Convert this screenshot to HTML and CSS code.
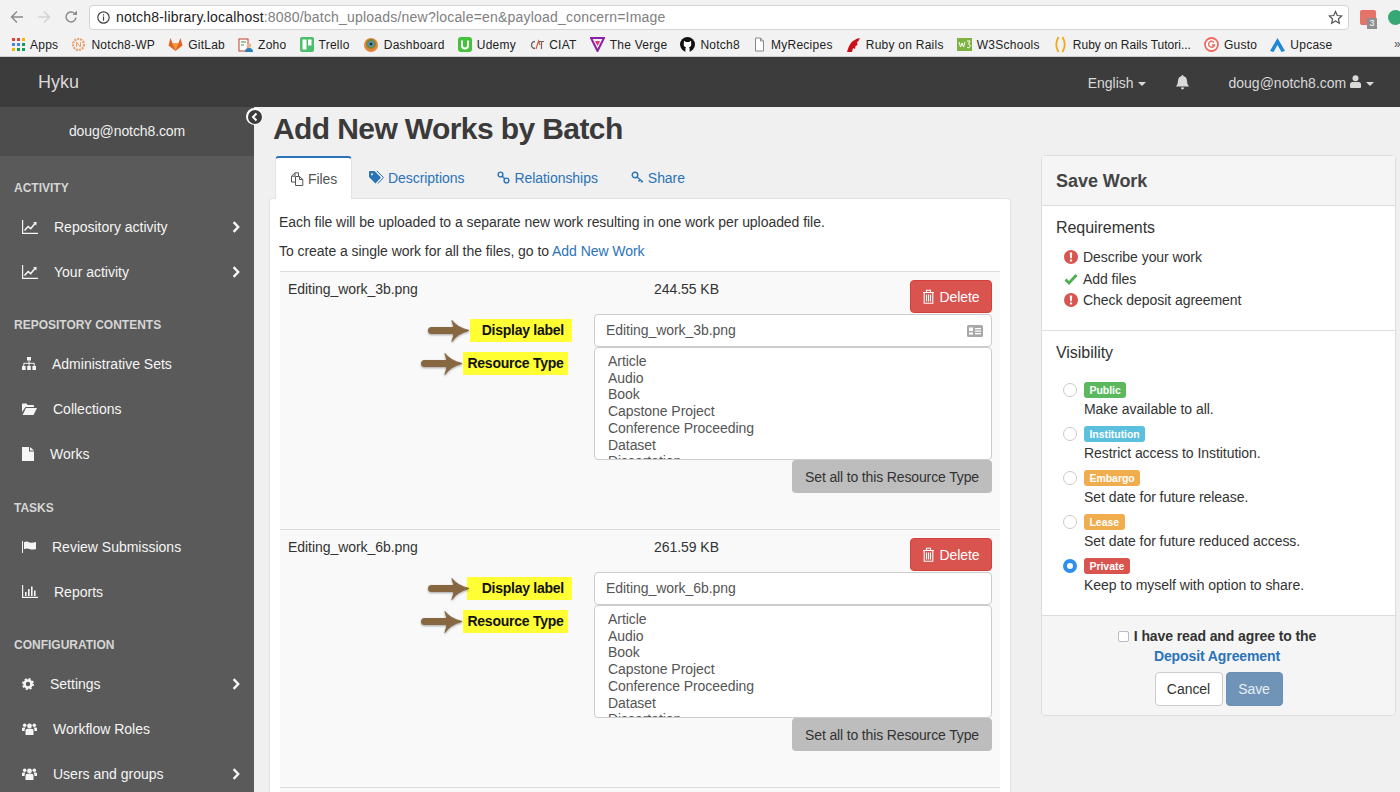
FILE: index.html
```html
<!DOCTYPE html>
<html lang="en">
<head>
    <meta charset="UTF-8">
    <title>Add New Works by Batch</title>
    <link rel="stylesheet" href="styles.css">
</head>
<body>
    <svg class="defs" xmlns="http://www.w3.org/2000/svg">
        <symbol id="i-chart" viewBox="0 0 16 14"><path d="M0.6 0v13.4H16" fill="none" stroke="currentColor" stroke-width="1.2"/><path d="M2.5 10.5l3.6-4 2.6 2.2 4-5" fill="none" stroke="currentColor" stroke-width="1.6"/><path d="M11 2.6l3.6-.8-.2 3.6z" fill="currentColor"/></symbol>
        <symbol id="i-chev" viewBox="0 0 8 12"><path d="M1.6 1.2L6.2 6l-4.6 4.8" fill="none" stroke="currentColor" stroke-width="2.4"/></symbol>
        <symbol id="i-sitemap" viewBox="0 0 14 13"><path d="M5 0h4v3.6H5zM0 9h3.6v4H0zM5.2 9h3.6v4H5.200zM10.400 9H14v4h-3.600z" fill="currentColor"/><path d="M1.800 9V6.300h10.400V9M7 3.600V9" fill="none" stroke="currentColor" stroke-width="1"/></symbol>
        <symbol id="i-folder" viewBox="0 0 15 12"><path d="M0 1.500Q0 .5 1 .5h3.500l1 1.500H11q1 0 1 1v1H3.500L0 9z" fill="currentColor"/><path d="M4 5h11l-3.500 7H.600z" fill="currentColor"/></symbol>
        <symbol id="i-file" viewBox="0 0 12 14"><path d="M0 0h7v4.500h5V14H0zM8 0l4 3.500H8z" fill="currentColor"/></symbol>
        <symbol id="i-flag" viewBox="0 0 14 12"><path d="M0 0h1v12H0z" fill="currentColor"/><path d="M2 1.200q2.500-1.200 5 0t7-.2v7q-3.500 1.200-6.500 0T2 8.200z" fill="currentColor"/></symbol>
        <symbol id="i-bars" viewBox="0 0 16 13"><path d="M.6 0v12.400H16" fill="none" stroke="currentColor" stroke-width="1.200"/><path d="M3 7h1.600v4H3zM6 4h1.600v7H6zM9 1.500h1.600V11H9zM12 5.500h1.600V11H12z" fill="currentColor"/></symbol>
        <symbol id="i-cog" viewBox="0 0 12 12"><circle cx="6" cy="6" r="3.500" fill="none" stroke="currentColor" stroke-width="2.600"/><circle cx="6" cy="6" r="5" fill="none" stroke="currentColor" stroke-width="2" stroke-dasharray="2 1.930"/></symbol>
        <symbol id="i-users" viewBox="0 0 15 12"><circle cx="7.500" cy="3" r="2.400" fill="currentColor"/><circle cx="2.700" cy="2.300" r="1.800" fill="currentColor"/><circle cx="12.300" cy="2.300" r="1.800" fill="currentColor"/><path d="M3.500 12V7.500q0-1.800 2-1.800h4q2 0 2 1.800V12z" fill="currentColor"/><path d="M0 8V5.500q0-1 1-1h2.500Q2.500 5.500 2.500 8zM15 8V5.500q0-1-1-1h-2.500q1 1 1 3.500z" fill="currentColor"/></symbol>
        <symbol id="i-trash" viewBox="0 0 13 15"><path d="M1 3.500h11M4.500 3.500V1.200h4v2.300M2.200 3.500v10.800h8.600V3.500M4.500 5.500v7M6.500 5.500v7M8.500 5.500v7" fill="none" stroke="currentColor" stroke-width="1.100"/></symbol>
        <symbol id="i-alert" viewBox="0 0 14 14"><circle cx="7" cy="7" r="7" fill="#d9534f"/><path d="M5.800 2.600h2.400l-.3 5.600H6.100zM5.900 9.400h2.200v2H5.900z" fill="#fff"/></symbol>
        <symbol id="i-arrow" viewBox="0 0 42 24"><path d="M3.500 11.500h24" stroke="currentColor" stroke-width="7" stroke-linecap="round"/><path d="M24 1.500q5 7 17 10-12 3-17 11 2-5 2-10.500T24 1.500z" fill="currentColor" stroke="currentColor" stroke-linejoin="round"/></symbol>
    </svg>

    <div class="browser-bar">
        <div class="browser-nav">
            <svg width="14" height="14" viewBox="0 0 14 14" class="nav-on"><path d="M13 7H2M7 1.500L1.500 7 7 12.500" fill="none" stroke="currentColor" stroke-width="1.500"/></svg>
            <svg width="14" height="14" viewBox="0 0 14 14" class="nav-off"><path d="M1 7h11M7 1.500L12.500 7 7 12.500" fill="none" stroke="currentColor" stroke-width="1.500"/></svg>
            <svg width="14" height="14" viewBox="0 0 14 14" class="nav-on"><path d="M12 7.500A5 5 0 1 1 10.500 3.300" fill="none" stroke="currentColor" stroke-width="1.500"/><path d="M8.500 5H13V.5z" fill="currentColor"/></svg>
        </div>
        <div class="url-box">
            <svg width="13" height="13" viewBox="0 0 13 13"><circle cx="6.500" cy="6.500" r="5.700" fill="none" stroke="#444" stroke-width="1.200"/><path d="M5.900 5.500h1.200v4.200H5.900zM5.900 3.200h1.200v1.200H5.900z" fill="#444"/></svg>
            <span class="url-text"><b>notch8-library.localhost</b>:8080/batch_uploads/new?locale=en&amp;payload_concern=Image</span>
            <svg class="url-star" width="15" height="15" viewBox="0 0 24 24"><path d="M12 2.500l2.900 6.300 6.900.8-5.100 4.700 1.400 6.800-6.100-3.400-6.100 3.400 1.400-6.800-5.100-4.700 6.900-.8z" fill="none" stroke="#555" stroke-width="2"/></svg>
        </div>
        <div class="ext-red">
            <span class="ext-num">3</span>
        </div>
        <div class="ext-green"></div>
    </div>

    <div class="bookmarks">
        <a class="bm"><svg width="13" height="13" viewBox="0 0 13 13"><g fill="#db4437"><rect width="3" height="3"/><rect x="5" width="3" height="3"/></g><rect x="10" width="3" height="3" fill="#f4b400"/><g fill="#4285f4"><rect y="5" width="3" height="3"/><rect x="5" y="5" width="3" height="3"/></g><rect x="10" y="5" width="3" height="3" fill="#0f9d58"/><g fill="#f4b400"><rect y="10" width="3" height="3"/></g><g fill="#0f9d58"><rect x="5" y="10" width="3" height="3"/><rect x="10" y="10" width="3" height="3"/></g></svg>Apps</a>
        <a class="bm"><svg width="15" height="15" viewBox="0 0 15 15"><circle cx="7.500" cy="7.500" r="5.500" fill="none" stroke="#e9a06a" stroke-width="2.200" stroke-dasharray="2 1"/><path d="M5.500 10V5l4 5V5" fill="none" stroke="#e9a06a"/></svg>Notch8-WP</a>
        <a class="bm"><svg width="15" height="15" viewBox="0 0 15 15"><path d="M7.500 14L.5 8.500 2.500 1l2.200 5.500h5.600L12.500 1l2 7.500z" fill="#e2622a"/><path d="M7.500 14L4.700 6.500h5.600z" fill="#f59c2c"/></svg>GitLab</a>
        <a class="bm"><svg width="15" height="16" viewBox="0 0 15 16"><rect x="1" y="2" width="9" height="12" fill="#fff" stroke="#c0392b"/><path d="M3 5h5M3 8h3" stroke="#3a8f3a"/><circle cx="11" cy="8.500" r="2.300" fill="#e8b48a"/><path d="M7 15q0-4 4-4t4 4z" fill="#2c7fb8"/></svg>Zoho</a>
        <a class="bm"><svg width="14" height="15" viewBox="0 0 14 15"><rect width="14" height="15" rx="2" fill="#4bbf6b"/><rect x="2.500" y="2.500" width="4" height="10" fill="#fff"/><rect x="8" y="2.500" width="3.500" height="6" fill="#fff"/></svg>Trello</a>
        <a class="bm"><svg width="16" height="16" viewBox="0 0 16 16"><circle cx="8" cy="8" r="7" fill="#e8843a"/><circle cx="8" cy="7" r="5" fill="#7a8a3a"/><circle cx="8" cy="7" r="2.800" fill="#4a90c8"/><circle cx="8" cy="7" r="1.300" fill="#222"/></svg>Dashboard</a>
        <a class="bm"><svg width="14" height="15" viewBox="0 0 14 15"><rect width="14" height="15" rx="3" fill="#45c23c"/><path d="M4 3.500v5a3 3 0 0 0 6 0v-5" fill="none" stroke="#fff" stroke-width="2"/></svg>Udemy</a>
        <a class="bm"><svg width="15" height="12" viewBox="0 0 15 12"><path d="M6 2.500a3.500 3.500 0 1 0 0 7" fill="none" stroke="#666" stroke-width="1.400"/><path d="M7 10l2.500-8L11 6" fill="none" stroke="#d9603a" stroke-width="1.200"/><path d="M10 2.500h5M12.500 2.500V10" fill="none" stroke="#666" stroke-width="1.200"/></svg>CIAT</a>
        <a class="bm"><svg width="15" height="15" viewBox="0 0 15 15"><path d="M1 1h13L7.500 14z" fill="none" stroke="#8a1fa8" stroke-width="2"/><path d="M5 4h5l-2.500 5z" fill="#e0337a"/></svg>The Verge</a>
        <a class="bm"><svg width="15" height="15" viewBox="0 0 15 15"><circle cx="7.500" cy="7.500" r="7.500" fill="#111"/><path d="M3.800 6.500L4 3.800l2 1.100h3l2-1.100.2 2.700q.6 3-2.200 3.700.6.500.6 1.500V15H5.400v-3.300Q5.400 10.700 6 10.200 3.200 9.500 3.800 6.500z" fill="#fff"/></svg>Notch8</a>
        <a class="bm"><svg width="13" height="15" viewBox="0 0 13 15"><path d="M2.500 1h5l3 3v10h-8z" fill="#fff" stroke="#888"/><path d="M7.500 1v3h3" fill="none" stroke="#888"/></svg>MyRecipes</a>
        <a class="bm"><svg width="15" height="16" viewBox="0 0 15 16"><path d="M1 15Q3 7 7 4t7-3q-1 3-3 4l.5 3-2 1-.5 3-2-1-1 4z" fill="#cc0f16"/></svg>Ruby on Rails</a>
        <a class="bm"><svg width="15" height="13" viewBox="0 0 15 13"><rect width="15" height="13" fill="#7cb342"/><path d="M2 4l1.500 5L5 5l1.500 4L8 4" fill="none" stroke="#fff"/><path d="M10 3h3l-1.500 3q2 .5 1.500 2.500T10 9.500" fill="none" stroke="#fff"/></svg>W3Schools</a>
        <a class="bm bm-long"><svg width="15" height="17" viewBox="0 0 15 17"><path d="M5.500 1Q1 8.500 5.500 16M9.500 1q4.500 7.500 0 15" fill="none" stroke="#f0a818" stroke-width="1.800"/></svg>Ruby on Rails Tutori...</a>
        <a class="bm"><svg width="15" height="15" viewBox="0 0 15 15"><circle cx="7.500" cy="7.500" r="6.500" fill="#fff" stroke="#ef6a5e" stroke-width="1.800"/><path d="M10 5.500a3 3 0 1 0 .5 2.500H8" fill="none" stroke="#ef6a5e" stroke-width="1.400"/></svg>Gusto</a>
        <a class="bm"><svg width="15" height="14" viewBox="0 0 15 14"><path d="M7.500 0L15 13l-3.500 1-4-7-4 7L0 13z" fill="#1e88d8"/></svg>Upcase</a>
        <span class="bm-more">»</span>
    </div>

    <nav class="navbar">
        <a class="brand">Hyku</a>
        <div class="nav-right">
            <a class="nav-lang">English <i class="caret"></i></a>
            <svg class="nav-bell" width="13" height="15" viewBox="0 0 13 15"><path d="M6.500 0q1 0 1 1.200Q11 2 11 6q0 3.500 2 5.500H0Q2 9.500 2 6q0-4 3.500-4.800Q5.500 0 6.500 0zM4.800 12.500h3.400q-.3 2-1.700 2t-1.700-2z" fill="currentColor"/></svg>
            <a class="nav-user">doug@notch8.com
                <svg width="11" height="13" viewBox="0 0 11 13"><circle cx="5.500" cy="3.300" r="3" fill="currentColor"/><path d="M0 12V9.500Q0 7 2.500 7h6Q11 7 11 9.500V12q0 1-1 1H1q-1 0-1-1z" fill="currentColor"/></svg>
                <i class="caret"></i></a>
        </div>
    </nav>

    <div class="layout">
        <aside class="sidebar">
            <div class="side-user">doug@notch8.com</div>

            <h4 class="side-head">ACTIVITY</h4>
            <a class="side-item"><svg class="ico" width="16" height="14"><use href="#i-chart"/></svg>Repository activity<svg class="chev" width="8" height="12"><use href="#i-chev"/></svg></a>
            <a class="side-item"><svg class="ico" width="16" height="14"><use href="#i-chart"/></svg>Your activity<svg class="chev" width="8" height="12"><use href="#i-chev"/></svg></a>

            <h4 class="side-head">REPOSITORY CONTENTS</h4>
            <a class="side-item"><svg class="ico" width="14" height="13"><use href="#i-sitemap"/></svg>Administrative Sets</a>
            <a class="side-item"><svg class="ico" width="15" height="12"><use href="#i-folder"/></svg>Collections</a>
            <a class="side-item"><svg class="ico" width="12" height="14"><use href="#i-file"/></svg>Works</a>

            <h4 class="side-head side-head-wide">TASKS</h4>
            <a class="side-item"><svg class="ico" width="14" height="12"><use href="#i-flag"/></svg>Review Submissions</a>
            <a class="side-item"><svg class="ico" width="16" height="13"><use href="#i-bars"/></svg>Reports</a>

            <h4 class="side-head">CONFIGURATION</h4>
            <a class="side-item"><svg class="ico" width="12" height="12"><use href="#i-cog"/></svg>Settings<svg class="chev" width="8" height="12"><use href="#i-chev"/></svg></a>
            <a class="side-item"><svg class="ico" width="15" height="12"><use href="#i-users"/></svg>Workflow Roles</a>
            <a class="side-item"><svg class="ico" width="15" height="12"><use href="#i-users"/></svg>Users and groups<svg class="chev" width="8" height="12"><use href="#i-chev"/></svg></a>
        </aside>
        <div class="side-toggle"><svg width="14" height="14" viewBox="0 0 14 14"><circle cx="7" cy="7" r="7" fill="#3c3c3c"/><path d="M8.500 3.500L5 7l3.500 3.500" fill="none" stroke="#fff" stroke-width="2"/></svg></div>

        <main class="main">
            <h1 class="title">Add New Works by Batch</h1>
            <div class="columns">
                <section class="work">
                    <ul class="tabs">
                        <li class="tab active"><svg width="14" height="14" viewBox="0 0 14 14"><path d="M5 10H1.500V4.200L5 .8h3.500V4M1.500 4.200H5V.8" fill="none" stroke="currentColor" stroke-width="1"/><path d="M5.500 4.500h4l3.300 3v6H5.500zM9.500 4.500v3h3.300" fill="none" stroke="currentColor" stroke-width="1"/></svg>Files</li>
                        <li class="tab"><svg width="15" height="13" viewBox="0 0 15 13"><path d="M0 1q0-1 1-1h4.500L12 6.500 6.500 12.500 0 6zM3 2.200a1 1 0 1 0 .01 0z" fill="currentColor" fill-rule="evenodd"/><path d="M8 0l6.500 6.500-5.500 6" fill="none" stroke="currentColor" stroke-width="1"/></svg>Descriptions</li>
                        <li class="tab"><svg width="13" height="13" viewBox="0 0 13 13"><circle cx="3.500" cy="3.500" r="2.400" fill="none" stroke="currentColor" stroke-width="1.400"/><circle cx="9.500" cy="9.500" r="2.400" fill="none" stroke="currentColor" stroke-width="1.400"/><path d="M5 5l3 3" stroke="currentColor" stroke-width="1.400"/></svg>Relationships</li>
                        <li class="tab"><svg width="13" height="13" viewBox="0 0 13 13"><circle cx="4" cy="4" r="2.800" fill="none" stroke="currentColor" stroke-width="1.400"/><path d="M6 6l6 5M9 8.500l-1.500 2M11 10l-1 1.500" fill="none" stroke="currentColor" stroke-width="1.300"/></svg>Share</li>
                    </ul>
                    <div class="panel">
                        <p class="note">Each file will be uploaded to a separate new work resulting in one work per uploaded file.</p>
                        <p class="note">To create a single work for all the files, go to <a class="link">Add New Work</a></p>

                        <div class="file-row">
                            <div class="file-head">
                                <span class="file-name">Editing_work_3b.png</span>
                                <span class="file-size">244.55 KB</span>
                                <a class="btn-delete"><svg width="13" height="15"><use href="#i-trash"/></svg>Delete</a>
                            </div>
                            <div class="field">
                                <div class="label-side label-display">
                                    <svg class="arrow" width="42" height="24"><use href="#i-arrow"/></svg>
                                    <span class="mark mark-first">Display label</span>
                                </div>
                                <div class="input-box">Editing_work_3b.png
                                    <svg class="input-card" width="16" height="12" viewBox="0 0 16 12"><rect width="16" height="12" rx="1.500" fill="#a8a8a8"/><rect x="2" y="2.500" width="4" height="3.500" fill="#fff"/><path d="M2 7.500h4v2H2zM8 3h6v1.300H8zM8 5.500h6v1.300H8zM8 8h6v1.300H8z" fill="#fff"/></svg>
                                </div>
                            </div>
                            <div class="field">
                                <div class="label-side label-type">
                                    <svg class="arrow" width="42" height="24"><use href="#i-arrow"/></svg>
                                    <span class="mark">Resource Type</span>
                                </div>
                                <ul class="type-list">
                                    <li>Article</li><li>Audio</li><li>Book</li><li>Capstone Project</li><li>Conference Proceeding</li><li>Dataset</li><li>Dissertation</li>
                                </ul>
                            </div>
                            <div class="set-all"><a class="btn-grey">Set all to this Resource Type</a></div>
                        </div>

                        <div class="file-row">
                            <div class="file-head">
                                <span class="file-name">Editing_work_6b.png</span>
                                <span class="file-size">261.59 KB</span>
                                <a class="btn-delete"><svg width="13" height="15"><use href="#i-trash"/></svg>Delete</a>
                            </div>
                            <div class="field">
                                <div class="label-side label-display">
                                    <svg class="arrow" width="42" height="24"><use href="#i-arrow"/></svg>
                                    <span class="mark mark-second">Display label</span>
                                </div>
                                <div class="input-box">Editing_work_6b.png</div>
                            </div>
                            <div class="field">
                                <div class="label-side label-type">
                                    <svg class="arrow" width="42" height="24"><use href="#i-arrow"/></svg>
                                    <span class="mark">Resource Type</span>
                                </div>
                                <ul class="type-list">
                                    <li>Article</li><li>Audio</li><li>Book</li><li>Capstone Project</li><li>Conference Proceeding</li><li>Dataset</li><li>Dissertation</li>
                                </ul>
                            </div>
                            <div class="set-all"><a class="btn-grey">Set all to this Resource Type</a></div>
                        </div>
                        <div class="file-row file-row-end"></div>
                    </div>
                </section>

                <aside class="save">
                    <h3 class="save-head">Save Work</h3>
                    <div class="save-req">
                        <h4 class="save-title">Requirements</h4>
                        <ul class="req-list">
                            <li><svg width="14" height="14"><use href="#i-alert"/></svg>Describe your work</li>
                            <li><svg width="14" height="14" viewBox="0 0 14 14"><path d="M1.500 7.500l3.500 3.500 7.500-8" fill="none" stroke="#4cae4c" stroke-width="2.800"/></svg>Add files</li>
                            <li><svg width="14" height="14"><use href="#i-alert"/></svg>Check deposit agreement</li>
                        </ul>
                    </div>
                    <div class="save-vis">
                        <h4 class="save-title">Visibility</h4>
                        <label class="vis"><input type="radio" name="vis"><span><b class="badge green">Public</b><br>Make available to all.</span></label>
                        <label class="vis"><input type="radio" name="vis"><span><b class="badge blue">Institution</b><br>Restrict access to Institution.</span></label>
                        <label class="vis"><input type="radio" name="vis"><span><b class="badge orange">Embargo</b><br>Set date for future release.</span></label>
                        <label class="vis"><input type="radio" name="vis"><span><b class="badge orange">Lease</b><br>Set date for future reduced access.</span></label>
                        <label class="vis"><input type="radio" name="vis" checked><span><b class="badge red">Private</b><br>Keep to myself with option to share.</span></label>
                    </div>
                    <div class="save-foot">
                        <div class="agree"><i class="check"></i>I have read and agree to the</div>
                        <a class="agree-link">Deposit Agreement</a>
                        <div class="foot-btns">
                            <a class="btn-cancel">Cancel</a>
                            <a class="btn-save">Save</a>
                        </div>
                    </div>
                </aside>
            </div>
        </main>
    </div>
</body>
</html>
```

FILE: styles.css
```css
* {
    margin: 0;
    padding: 0;
    box-sizing: border-box;
}

html, body {
    height: 792px;
    overflow: hidden;
}

body {
    font-family: "Liberation Sans", Arial, sans-serif;
    font-size: 14px;
    color: #333;
    background: #f0f0f0;
    display: flex;
    flex-direction: column;
}

ul {
    list-style: none;
}

.defs {
    display: none;
}

/* browser chrome */
.browser-bar {
    height: 33px;
    background: #f2f2f2;
    display: flex;
    align-items: center;
    padding: 1px 0 0 10px;
    flex: none;
    overflow: hidden;
}

.browser-nav {
    display: flex;
    gap: 13px;
    width: 79px;
    flex: none;
}

.nav-on {
    color: #8c8c8c;
}

.nav-off {
    color: #d2d2d2;
}

.url-box {
    width: 1260px;
    height: 25px;
    flex: none;
    background: #fff;
    border: 1px solid #d4d4d4;
    border-radius: 4px;
    display: flex;
    align-items: center;
    padding: 0 5px 0 7px;
    gap: 6px;
    font-size: 14px;
    letter-spacing: 0.2px;
    color: #808080;
}

.url-text {
    flex: 1;
    white-space: nowrap;
}

.url-text b {
    font-weight: normal;
    color: #222;
}

.ext-red {
    width: 16px;
    height: 15px;
    flex: none;
    background: #e57368;
    border-radius: 2px;
    margin-left: 11px;
    position: relative;
}

.ext-num {
    position: absolute;
    left: 7px;
    top: 8px;
    width: 10px;
    height: 11px;
    background: #8f8f8f;
    color: #fff;
    font-size: 9px;
    line-height: 11px;
    text-align: center;
}

.ext-green {
    width: 15px;
    height: 15px;
    border-radius: 50%;
    background: #35a875;
    margin-left: 12px;
    flex: none;
}

.bookmarks {
    height: 24px;
    background: #f2f2f2;
    border-bottom: 1px solid #d0d0d0;
    display: flex;
    align-items: center;
    padding-left: 12px;
    gap: 13.1px;
    font-size: 12px;
    letter-spacing: 0.25px;
    color: #222;
    white-space: nowrap;
    flex: none;
    position: relative;
}

.bm {
    display: flex;
    align-items: center;
    gap: 5px;
}

.bm svg {
    flex: none;
}

.bm-long {
    letter-spacing: 0;
}

.bm-more {
    position: absolute;
    left: 1394px;
    top: 4px;
    color: #555;
}

/* top navbar */
.navbar {
    height: 50px;
    background: #3c3c3c;
    display: flex;
    align-items: center;
    justify-content: space-between;
    padding: 1px 26px 0 38px;
    color: #d9d9d9;
    flex: none;
}

.brand {
    font-size: 18px;
}

.nav-right {
    display: flex;
    align-items: center;
    font-size: 14px;
}

.nav-lang {
    margin-right: 30px;
}

.nav-bell {
    margin-right: 39px;
}

.caret {
    display: inline-block;
    border-top: 4px solid currentColor;
    border-left: 4px solid transparent;
    border-right: 4px solid transparent;
    vertical-align: middle;
    margin-left: 1px;
}

.layout {
    flex: 1;
    display: flex;
    min-height: 0;
    position: relative;
    overflow: hidden;
}

/* sidebar */
.sidebar {
    width: 254px;
    flex: none;
    background: #5a5a5a;
    color: #fff;
    overflow: hidden;
}

.side-user {
    height: 49px;
    background: #4d4d4d;
    color: #f0f0f0;
    text-align: center;
    letter-spacing: -0.1px;
    line-height: 49px;
    margin-bottom: 23.5px;
}

.side-toggle {
    position: absolute;
    left: 246px;
    top: 1px;
    width: 17px;
    height: 17px;
    border-radius: 50%;
    background: #fff;
    display: flex;
    align-items: center;
    justify-content: center;
}

.side-head {
    font-size: 12px;
    line-height: 17px;
    color: #d6d6d6;
    padding-left: 14px;
    margin: 22.5px 0 7.5px;
}

.side-head-wide {
    margin-top: 23.5px;
}

.side-item {
    height: 45px;
    display: flex;
    align-items: center;
    padding: 0 14px 0 22px;
    color: #f5f5f5;
}

.ico {
    margin-right: 16px;
    flex: none;
}

.chev {
    margin-left: auto;
}

/* main */
.main {
    flex: 1;
    padding: 0 4px 0 15px;
    min-width: 0;
    letter-spacing: -0.05px;
}

.title {
    font-size: 30px;
    letter-spacing: -0.6px;
    line-height: 44px;
    font-weight: bold;
    padding-left: 4px;
    height: 49px;
    color: #3a3a3a;
}

.columns {
    display: flex;
    align-items: flex-start;
    justify-content: space-between;
}

.work {
    width: 742px;
}

.tabs {
    display: flex;
    padding-left: 6px;
    height: 42px;
}

.tab {
    height: 43px;
    display: flex;
    align-items: center;
    gap: 4px;
    color: #2b73b7;
    padding: 0 16px 0 17px;
    position: relative;
    z-index: 1;
}

.tab.active {
    width: 77px;
    background: #fff;
    color: #555;
    border: 1px solid #e3e3e3;
    border-top: 2px solid #2b73b7;
    border-bottom: none;
    border-radius: 4px 4px 0 0;
    padding: 0 0 0 14px;
}

.panel {
    background: #fff;
    border: 1px solid #e3e3e3;
    border-bottom: none;
    border-radius: 4px 4px 0 0;
    padding: 13px 10px 0 9px;
    height: 594px;
}

.note {
    line-height: 20px;
    margin-bottom: 9px;
}

.link {
    color: #2b73b7;
}

.file-row {
    height: 258px;
    margin-left: 1px;
    background: #f9f9f9;
    border-top: 1px solid #ddd;
    padding: 8px 8px 0 8px;
}

.note + .file-row {
    margin-top: 10px;
}

.file-row-end {
    height: 5px;
    padding: 0;
}

.file-head {
    display: flex;
    height: 34px;
    align-items: flex-start;
}

.file-name {
    width: 366px;
    line-height: 18px;
}

.file-size {
    line-height: 18px;
}

.btn-delete {
    margin-left: auto;
    width: 82px;
    height: 33px;
    background: #d9534f;
    border: 1px solid #d43f3a;
    border-radius: 4px;
    color: #fff;
    display: flex;
    align-items: center;
    justify-content: center;
    gap: 4px;
}

.field {
    display: flex;
}

.label-side {
    width: 306px;
    flex: none;
    display: flex;
    justify-content: flex-end;
    align-items: center;
}

.label-display {
    height: 33px;
    padding-right: 22px;
}

.label-type {
    height: 33px;
    padding-right: 26px;
}

.arrow {
    flex: none;
    z-index: 1;
    color: #86673f;
    filter: drop-shadow(0 1px 1px rgba(0, 0, 0, 0.35));
}

.mark {
    background: #ffff33;
    color: #111;
    font-weight: bold;
    letter-spacing: -0.25px;
    line-height: 23px;
    width: 105px;
    flex: none;
    text-align: center;
    white-space: nowrap;
}

.mark-first {
    width: 102px;
    text-align: right;
    padding-right: 8px;
}

.mark-second {
    margin-left: -3px;
    text-align: right;
    padding-right: 8px;
}

.input-box {
    flex: 1;
    height: 33px;
    background: #fff;
    border: 1px solid #ccc;
    border-radius: 4px;
    padding: 0 11px;
    line-height: 31px;
    color: #555;
    position: relative;
}

.input-card {
    position: absolute;
    right: 8px;
    top: 10px;
}

.type-list {
    flex: 1;
    height: 113px;
    overflow: hidden;
    background: #fff;
    border: 1px solid #ccc;
    border-radius: 4px;
    padding: 5px 13px;
    line-height: 16.7px;
    color: #555;
}

.set-all {
    display: flex;
    justify-content: flex-end;
}

.btn-grey {
    width: 200px;
    height: 33px;
    background: #bdbdbd;
    border-radius: 4px;
    color: #333;
    text-align: center;
    letter-spacing: -0.14px;
    line-height: 34px;
}

/* save panel */
.save {
    width: 355px;
    height: 561px;
    margin-top: -1px;
    background: #fff;
    border: 1px solid #ddd;
    border-radius: 4px;
}

.save-head {
    height: 50px;
    background: #f5f5f5;
    border-bottom: 1px solid #ddd;
    font-size: 18px;
    line-height: 50px;
    padding-left: 14px;
    color: #444;
}

.save-req {
    height: 125px;
    border-bottom: 1px solid #ddd;
    padding: 12px 14px 0;
}

.save-title {
    font-size: 16px;
    font-weight: normal;
    line-height: 20px;
}

.req-list {
    margin: 8.5px 0 0 8px;
}

.req-list li {
    display: flex;
    align-items: center;
    gap: 5px;
    height: 21.5px;
}

.save-vis {
    height: 284px;
    padding: 12px 14px 0;
}

.save-vis .save-title {
    margin-bottom: 18px;
}

.vis {
    display: flex;
    align-items: flex-start;
    height: 44px;
    padding-left: 7px;
    gap: 7px;
    line-height: 19px;
}

.vis input {
    appearance: none;
    width: 14px;
    height: 14px;
    flex: none;
    margin-top: 2px;
    border: 1px solid #ccc;
    border-radius: 50%;
    background: #fff;
}

.vis input:checked {
    border: 4.500px solid #2e8ff0;
}

.badge {
    display: inline-block;
    font-size: 10.5px;
    line-height: 16px;
    height: 16px;
    margin-top: 1px;
    padding: 0 5.500px;
    border-radius: 3px;
    color: #fff;
    vertical-align: top;
}

.green {
    background: #5cb85c;
}

.blue {
    background: #5bc0de;
}

.orange {
    background: #f0ad4e;
}

.red {
    background: #d9534f;
}

.save-foot {
    height: 100px;
    background: #f5f5f5;
    border-top: 1px solid #ddd;
    border-radius: 0 0 4px 4px;
    text-align: center;
    padding-top: 10px;
}

.agree {
    font-weight: bold;
    letter-spacing: -0.1px;
    line-height: 20px;
    display: flex;
    justify-content: center;
    align-items: center;
    gap: 5px;
    padding-right: 3px;
}

.check {
    width: 11px;
    height: 11px;
    border: 1px solid #bbb;
    border-radius: 2px;
    background: #fff;
}

.agree-link {
    display: block;
    font-weight: bold;
    letter-spacing: -0.1px;
    color: #2b73b7;
    line-height: 20px;
    padding-right: 3px;
}

.foot-btns {
    display: flex;
    justify-content: center;
    gap: 3px;
    margin-top: 6px;
}

.btn-cancel {
    width: 68px;
    height: 34px;
    line-height: 32px;
    background: #fff;
    border: 1px solid #ccc;
    border-radius: 4px;
}

.btn-save {
    width: 57px;
    height: 34px;
    line-height: 32px;
    background: #6f94b8;
    border: 1px solid #6a8fb2;
    border-radius: 4px;
    color: #e8eef4;
}
```
